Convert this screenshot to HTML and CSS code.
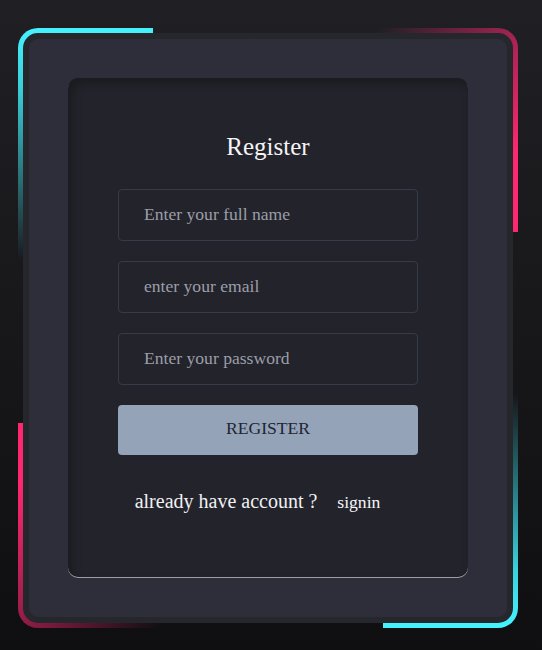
FILE: index.html
```html
<!DOCTYPE html>
<html lang="en">
<head>
<meta charset="utf-8">
<title>Register</title>
<link rel="stylesheet" href="styles.css">
</head>
<body>
  <div class="frame">
    <span class="edge edge-tl"></span>
    <span class="edge edge-tr"></span>
    <span class="edge edge-bl"></span>
    <span class="edge edge-br"></span>
    <div class="card">
      <form class="panel">
        <h2 class="title">Register</h2>
        <input class="field" type="text" placeholder="Enter your full name">
        <input class="field" type="email" placeholder="enter your email">
        <input class="field" type="password" placeholder="Enter your password">
        <button class="btn" type="button">REGISTER</button>
        <p class="switch"><span class="switch-text">already have account ?</span><a class="switch-link" href="#">signin</a></p>
      </form>
    </div>
  </div>
</body>
</html>
```

FILE: styles.css
```css
* { box-sizing: border-box; }

html, body { height: 100%; }

body {
  margin: 0;
  padding: 28px 0 0 18px;
  background: linear-gradient(to bottom, #202024 0%, #161619 60%, #0f0f11 100%);
  font-family: "Liberation Serif", "Times New Roman", serif;
  overflow: hidden;
}

.frame {
  position: relative;
  width: 500px;
  height: 600px;
  padding: 5px;
  border-radius: 20px;
  overflow: hidden;
}

.edge {
  position: absolute;
  display: block;
}

.edge-tl {
  left: 0;
  top: 0;
  width: 135px;
  height: 232px;
  background: linear-gradient(to bottom, #45f3ff 0%, #3ad0dc 25%, rgba(69, 243, 255, 0) 100%);
}

.edge-tr {
  right: 0;
  top: 0;
  width: 165px;
  height: 204px;
  background: linear-gradient(to bottom right, rgba(255, 39, 112, 0) 8%, #ff2770 80%);
}

.edge-bl {
  left: 0;
  bottom: 0;
  width: 167px;
  height: 205px;
  background: linear-gradient(to bottom right, #ff2770 15%, rgba(255, 39, 112, 0) 92%);
}

.edge-br {
  right: 0;
  bottom: 0;
  width: 135px;
  height: 235px;
  background: linear-gradient(to top, #45f3ff 0%, #3ad0dc 25%, rgba(69, 243, 255, 0) 100%);
}

.card {
  position: relative;
  z-index: 1;
  width: 490px;
  height: 590px;
  padding: 39px 39px 40px;
  border: 6px solid #26262d;
  border-radius: 15px;
  background: #2e2e3a;
}

.panel {
  display: flex;
  flex-direction: column;
  align-items: center;
  width: 400px;
  height: 499px;
  padding-top: 55px;
  border-radius: 10px;
  background: #23232b;
  box-shadow: inset 4px 5px 10px rgba(0, 0, 0, 0.28), 0 1px 0 #9c9ca2;
}

.title {
  margin: 0 0 28px;
  font-size: 25px;
  font-weight: normal;
  line-height: 28px;
  color: #f4f4f6;
}

.field {
  display: block;
  width: 300px;
  height: 52px;
  margin: 0 0 20px;
  padding: 0 25px 2px;
  border: 1px solid #363b49;
  border-radius: 4px;
  background: transparent;
  font-family: "Liberation Serif", "Times New Roman", serif;
  font-size: 17.6px;
  color: #e8e8ec;
  outline: none;
}

.field::placeholder {
  color: #9b9ea8;
}

.btn {
  display: block;
  width: 300px;
  height: 50px;
  margin: 0;
  padding: 0 0 3px;
  border: none;
  border-radius: 4px;
  background: #94a3b8;
  font-family: "Liberation Serif", "Times New Roman", serif;
  font-size: 17.6px;
  color: #1e2533;
  cursor: pointer;
}

.switch {
  display: flex;
  align-items: baseline;
  gap: 20px;
  margin: 34px 0 0;
  padding-right: 21px;
  line-height: 24px;
}

.switch-text {
  font-size: 20px;
  color: #f1f1f3;
}

.switch-link {
  font-size: 17.6px;
  color: #f6f6f8;
  text-decoration: none;
}
```
